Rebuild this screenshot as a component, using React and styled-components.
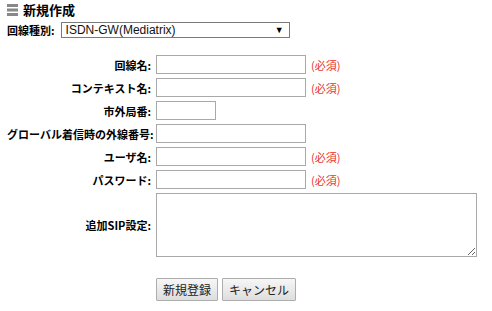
import React from "react";
import styled, { createGlobalStyle } from "styled-components";

const GlobalStyle = createGlobalStyle`
  body {
    margin: 0;
    background: #fff;
    font-family: "Liberation Sans", "Noto Sans CJK JP", sans-serif;
    color: #000;
  }
`;

const fields = [
  { label: "回線名:", width: 150, required: true },
  { label: "コンテキスト名:", width: 150, required: true },
  { label: "市外局番:", width: 60 },
  { label: "グローバル着信時の外線番号:", width: 150 },
  { label: "ユーザ名:", width: 150, required: true },
  { label: "パスワード:", width: 150, required: true },
];

function MenuIcon() {
  return (
    <svg width="11" height="12" viewBox="0 0 11 12">
      <rect x="0" y="0" width="11" height="3" fill="#888" />
      <rect x="0" y="4.5" width="11" height="3" fill="#888" />
      <rect x="0" y="9" width="11" height="3" fill="#888" />
    </svg>
  );
}

function App() {
  return (
    <Page>
      <GlobalStyle />
      <Title>
        <MenuIcon />
        <span>新規作成</span>
      </Title>

      <TypeRow>
        <Label>回線種別:</Label>
        <SelectBox>
          <span>ISDN-GW(Mediatrix)</span>
          <Arrow>▼</Arrow>
        </SelectBox>
      </TypeRow>

      <Form>
        {fields.map((f) => (
          <React.Fragment key={f.label}>
            <Label>{f.label}</Label>
            <Field>
              <Input type="text" $width={f.width} />
              {f.required && <Required>(必須)</Required>}
            </Field>
          </React.Fragment>
        ))}
        <Label>追加SIP設定:</Label>
        <Field>
          <TextArea />
        </Field>
      </Form>

      <Buttons>
        <Button>新規登録</Button>
        <Button>キャンセル</Button>
      </Buttons>
    </Page>
  );
}

const Page = styled.div`
  padding: 4px 0 0 7px;
`;

const Title = styled.h2`
  display: flex;
  align-items: center;
  gap: 5px;
  margin: 0;
  font-size: 13px;
  font-weight: bold;
  font-family: "Noto Sans CJK JP", sans-serif;
  line-height: 12px;
  height: 12px;
`;

const Label = styled.div`
  font-family: "Noto Sans CJK JP", sans-serif;
  font-size: 11px;
  font-weight: bold;
  text-align: right;
  white-space: nowrap;
  line-height: 16px;
`;

const TypeRow = styled.div`
  display: flex;
  align-items: center;
  gap: 6px;
  margin-top: 6px;
`;

const SelectBox = styled.div`
  display: flex;
  align-items: center;
  justify-content: space-between;
  box-sizing: border-box;
  width: 229px;
  height: 16px;
  padding: 0 5px 0 4px;
  border: 1px solid #7a7a7a;
  font-size: 12px;
  color: #111;
`;

const Arrow = styled.span`
  font-size: 9px;
  color: #000;
`;

const Form = styled.div`
  display: grid;
  grid-template-columns: 144px auto;
  column-gap: 5px;
  row-gap: 4px;
  align-items: center;
  margin-top: 17px;
`;

const Field = styled.div`
  display: flex;
  align-items: center;
  gap: 5px;
`;

const Input = styled.input`
  box-sizing: border-box;
  width: ${(p) => p.$width}px;
  height: 19px;
  margin: 0;
  border: 1px solid #a9a9a9;
  padding: 1px 3px;
`;

const Required = styled.span`
  color: #e8312f;
  font-family: "Noto Sans CJK JP", sans-serif;
  font-size: 11px;
`;

const TextArea = styled.textarea`
  box-sizing: border-box;
  width: 321px;
  height: 64px;
  margin: 0;
  border: 1px solid #a9a9a9;
`;

const Buttons = styled.div`
  display: flex;
  gap: 4px;
  margin: 21px 0 0 149px;
`;

const Button = styled.button`
  height: 23px;
  margin: 0;
  padding: 0 6px;
  font-family: "Noto Sans CJK JP", sans-serif;
  font-size: 12px;
  color: #222;
  border: 1px solid #adadad;
  border-radius: 1px;
  background: linear-gradient(#f6f6f6, #dedede);
`;

export default App;
